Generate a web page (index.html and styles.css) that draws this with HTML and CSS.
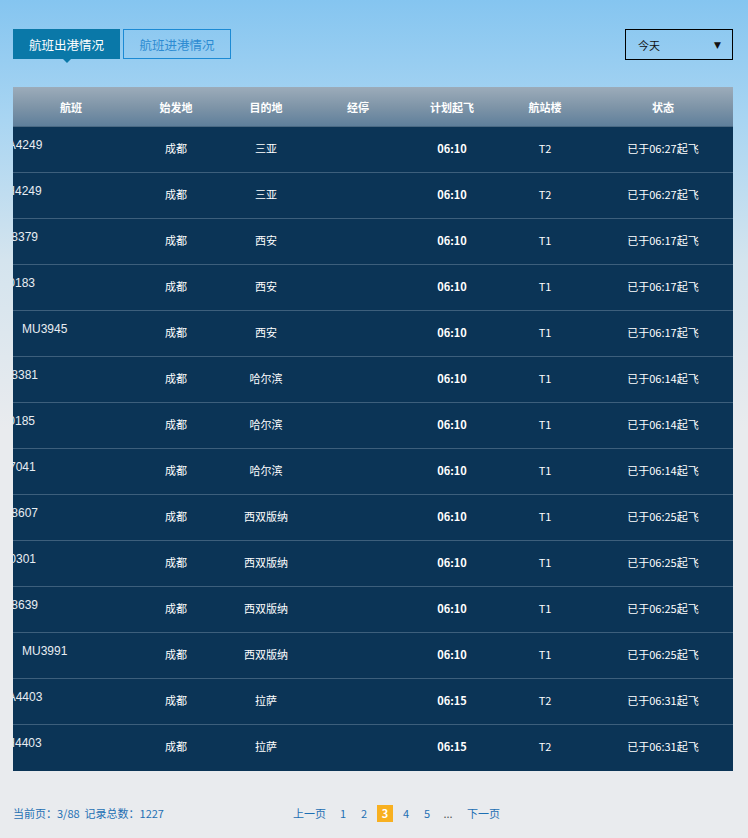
FILE: index.html
```html
<!DOCTYPE html>
<html lang="zh-CN">
<head>
<meta charset="utf-8">
<title>航班出港情况</title>
<link rel="stylesheet" href="styles.css">
</head>
<body>
<div class="page">
  <div class="topbar">
    <div class="tabs">
      <a class="tab tab-active">航班出港情况</a>
      <a class="tab tab-idle">航班进港情况</a>
    </div>
    <div class="select">
      <span>今天</span>
      <span class="caret">▼</span>
    </div>
  </div>

  <table class="flights">
    <colgroup>
      <col class="c1"><col class="c2"><col class="c3"><col class="c4"><col class="c5"><col class="c6"><col class="c7">
    </colgroup>
    <thead>
      <tr><th>航班</th><th>始发地</th><th>目的地</th><th>经停</th><th>计划起飞</th><th>航站楼</th><th>状态</th></tr>
    </thead>
    <tbody>
      <tr><td class="fno"><span class="m10">CA4249</span></td><td>成都</td><td>三亚</td><td></td><td class="t">06:10</td><td>T2</td><td>已于06:27起飞</td></tr>
      <tr><td class="fno"><span class="m12">ZH4249</span></td><td>成都</td><td>三亚</td><td></td><td class="t">06:10</td><td>T2</td><td>已于06:27起飞</td></tr>
      <tr><td class="fno"><span class="m17">3U8379</span></td><td>成都</td><td>西安</td><td></td><td class="t">06:10</td><td>T1</td><td>已于06:17起飞</td></tr>
      <tr><td class="fno"><span class="m20">3U0183</span></td><td>成都</td><td>西安</td><td></td><td class="t">06:10</td><td>T1</td><td>已于06:17起飞</td></tr>
      <tr><td class="fno"><span class="m0">MU3945</span></td><td>成都</td><td>西安</td><td></td><td class="t">06:10</td><td>T1</td><td>已于06:17起飞</td></tr>
      <tr><td class="fno"><span class="m17">3U8381</span></td><td>成都</td><td>哈尔滨</td><td></td><td class="t">06:10</td><td>T1</td><td>已于06:14起飞</td></tr>
      <tr><td class="fno"><span class="m20">3U0185</span></td><td>成都</td><td>哈尔滨</td><td></td><td class="t">06:10</td><td>T1</td><td>已于06:14起飞</td></tr>
      <tr><td class="fno"><span class="m20">ZH7041</span></td><td>成都</td><td>哈尔滨</td><td></td><td class="t">06:10</td><td>T1</td><td>已于06:14起飞</td></tr>
      <tr><td class="fno"><span class="m17">3U8607</span></td><td>成都</td><td>西双版纳</td><td></td><td class="t">06:10</td><td>T1</td><td>已于06:25起飞</td></tr>
      <tr><td class="fno"><span class="m19">3U0301</span></td><td>成都</td><td>西双版纳</td><td></td><td class="t">06:10</td><td>T1</td><td>已于06:25起飞</td></tr>
      <tr><td class="fno"><span class="m17">3U8639</span></td><td>成都</td><td>西双版纳</td><td></td><td class="t">06:10</td><td>T1</td><td>已于06:25起飞</td></tr>
      <tr><td class="fno"><span class="m0">MU3991</span></td><td>成都</td><td>西双版纳</td><td></td><td class="t">06:10</td><td>T1</td><td>已于06:25起飞</td></tr>
      <tr><td class="fno"><span class="m10">CA4403</span></td><td>成都</td><td>拉萨</td><td></td><td class="t">06:15</td><td>T2</td><td>已于06:31起飞</td></tr>
      <tr><td class="fno"><span class="m12">ZH4403</span></td><td>成都</td><td>拉萨</td><td></td><td class="t">06:15</td><td>T2</td><td>已于06:31起飞</td></tr>
    </tbody>
  </table>

  <div class="footer">
    <div class="info">当前页：3/88&nbsp;&nbsp;记录总数：1227</div>
    <div class="pager">
      <a class="pg pg-text prev">上一页</a>
      <a class="pg">1</a>
      <a class="pg">2</a>
      <a class="pg pg-on">3</a>
      <a class="pg">4</a>
      <a class="pg">5</a>
      <span class="pg dots">...</span>
      <a class="pg pg-text next">下一页</a>
    </div>
  </div>
</div>
</body>
</html>
```

FILE: styles.css
```css
html, body {
  margin: 0;
  padding: 0;
}
body {
  min-height: 838px;
  background: linear-gradient(to bottom, #85c5f0 0px, #a9d5f2 120px, #d4e4ee 260px, #e9ebee 430px, #e9ebee 100%);
  font-family: "Microsoft YaHei", "Noto Sans CJK SC", "Noto Sans", sans-serif;
  font-size: 11px;
}
.page {
  width: 720px;
  padding: 29px 0 0 13px;
}
.topbar {
  display: flex;
  justify-content: space-between;
  align-items: flex-start;
  height: 31px;
}
.tabs {
  display: flex;
  gap: 3px;
}
.tab {
  display: flex;
  align-items: center;
  justify-content: center;
  box-sizing: border-box;
  height: 30px;
  font-size: 12.5px;
  cursor: pointer;
}
.tab-active {
  width: 107px;
  background: #0a78a8;
  color: #ffffff;
  position: relative;
}
.tab-active::after {
  content: "";
  position: absolute;
  left: 50%;
  bottom: -4px;
  margin-left: -4px;
  border-left: 4px solid transparent;
  border-right: 4px solid transparent;
  border-top: 4px solid #0a78a8;
}
.tab-idle {
  width: 108px;
  border: 1px solid #1c8ad4;
  color: #2d8bd2;
}
.select {
  box-sizing: border-box;
  width: 108px;
  height: 31px;
  border: 1px solid #000;
  display: flex;
  align-items: center;
  justify-content: space-between;
  padding: 0 11px 0 12px;
  color: #111;
  font-size: 11px;
}
.caret {
  font-size: 9px;
  font-family: "DejaVu Sans", sans-serif;
}
.flights {
  margin-top: 27px;
  width: 720px;
  border-collapse: collapse;
  table-layout: fixed;
  background: #0b3456;
}
.c1 { width: 116px; }
.c2 { width: 94px; }
.c3 { width: 86px; }
.c4 { width: 98px; }
.c5 { width: 90px; }
.c6 { width: 96px; }
.c7 { width: 140px; }
.flights th {
  height: 39px;
  padding: 0;
  background: linear-gradient(to bottom, #9cacba 0%, #7f95a8 50%, #5f7f9b 100%);
  border-bottom: 1px solid #4a6983;
  color: #ffffff;
  font-weight: bold;
  font-size: 11px;
  text-align: center;
}
.flights tbody tr {
  height: 46px;
}
.flights td {
  padding: 0 0 3px 0;
  border-bottom: 1px solid #3d5f7c;
  color: #ffffff;
  text-align: center;
  font-size: 11px;
  line-height: 14px;
}
.flights tbody tr:last-child td {
  border-bottom: none;
}
.flights td.t {
  font-weight: bold;
}
.flights td.fno {
  text-align: left;
  vertical-align: top;
  overflow: hidden;
  white-space: nowrap;
  padding: 11px 0 0 0;
  font-family: "Liberation Sans", Arial, sans-serif;
  font-size: 12px;
  line-height: 14px;
  color: #e8edf2;
}
.fno span { display: inline-block; }
.m0 { margin-left: 9px; }
.m10 { margin-left: -14px; }
.m12 { margin-left: -14px; }
.m17 { margin-left: -17px; }
.m19 { margin-left: -19px; }
.m20 { margin-left: -20px; }
.footer {
  display: grid;
  grid-template-columns: 280px auto;
  align-items: center;
  margin-top: 34px;
  height: 17px;
  color: #1d6fb3;
  font-size: 11px;
}
.pager {
  display: flex;
  align-items: center;
  gap: 5px;
}
.pg {
  min-width: 16px;
  height: 17px;
  display: flex;
  align-items: center;
  justify-content: center;
  color: #1d6fb3;
  cursor: pointer;
}
.pg-text { min-width: 0; }
.prev { margin-right: 4px; }
.next { margin-left: 6px; }
.pg-on {
  background: #f8b020;
  color: #ffffff;
  font-weight: bold;
}
.dots { color: #555; }
```
